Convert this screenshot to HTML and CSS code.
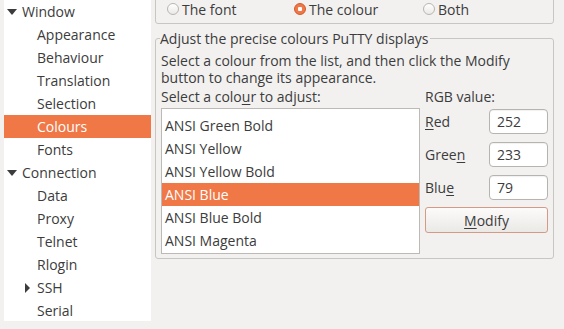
FILE: index.html
```html
<!DOCTYPE html>
<html lang="en">

<head>
    <meta charset="UTF-8">
    <title>PuTTY Configuration - Colours</title>
    <link rel="stylesheet" href="styles.css">
</head>

<body>
    <div class="dialog">
        <ul class="tree">
            <li class="node"><span class="arrow down"></span>Window</li>
            <li class="leaf">Appearance</li>
            <li class="leaf">Behaviour</li>
            <li class="leaf">Translation</li>
            <li class="leaf">Selection</li>
            <li class="leaf selected">Colours</li>
            <li class="leaf">Fonts</li>
            <li class="node"><span class="arrow down"></span>Connection</li>
            <li class="leaf">Data</li>
            <li class="leaf">Proxy</li>
            <li class="leaf">Telnet</li>
            <li class="leaf">Rlogin</li>
            <li class="leaf has-kids"><span class="arrow right"></span>SSH</li>
            <li class="leaf">Serial</li>
        </ul>

        <div class="panel">
            <div class="frame radios">
                <label class="radio"><span class="dot"></span>The font</label>
                <label class="radio"><span class="dot checked"></span>The colour</label>
                <label class="radio"><span class="dot"></span>Both</label>
            </div>

            <fieldset class="frame colours">
                <legend>Adjust the precise colours PuTTY displays</legend>
                <p class="hint">Select a colour from the list, and then click the Modify<br>button to change its appearance.</p>
                <div class="columns">
                    <div class="pick">
                        <div class="caption">Select a colo<u>u</u>r to adjust:</div>
                        <ul class="list">
                            <li>ANSI Green Bold</li>
                            <li>ANSI Yellow</li>
                            <li>ANSI Yellow Bold</li>
                            <li class="selected">ANSI Blue</li>
                            <li>ANSI Blue Bold</li>
                            <li>ANSI Magenta</li>
                        </ul>
                    </div>
                    <div class="rgb">
                        <div class="caption">RGB value:</div>
                        <div class="field">
                            <label for="red"><u>R</u>ed</label>
                            <input type="text" id="red" value="252">
                        </div>
                        <div class="field">
                            <label for="green">Gree<u>n</u></label>
                            <input type="text" id="green" value="233">
                        </div>
                        <div class="field">
                            <label for="blue">Blu<u>e</u></label>
                            <input type="text" id="blue" value="79">
                        </div>
                        <button type="button"><u>M</u>odify</button>
                    </div>
                </div>
            </fieldset>
        </div>
    </div>
</body>

</html>
```

FILE: styles.css
```css
body {
    margin: 0;
    background: #f2f1f0;
    font-family: "Open Sans", sans-serif;
    font-size: 14px;
    color: #3c3c3c;
    overflow: hidden;
}

ul {
    list-style: none;
    margin: 0;
    padding: 0;
}

u {
    text-decoration-thickness: 1px;
    text-underline-offset: 2px;
}

.dialog {
    display: flex;
    gap: 4px;
    padding-left: 4px;
}

/* tree on the left */

.tree {
    width: 147px;
    height: 321px;
    background: #fff;
}

.tree li {
    display: flex;
    align-items: center;
    height: 23px;
    white-space: nowrap;
}

.tree .node {
    padding-left: 3px;
}

.tree .leaf {
    padding-left: 33px;
}

.tree .has-kids {
    padding-left: 21px;
}

.tree .selected {
    background: #f07746;
    color: #fff;
}

.arrow {
    width: 0;
    height: 0;
    border-style: solid;
    border-color: transparent;
}

.arrow.down {
    border-width: 6px 5px 0 5px;
    border-top-color: #3c3c3c;
    margin-right: 5px;
}

.arrow.right {
    border-width: 5px 0 5px 5px;
    border-left-color: #3c3c3c;
    margin-right: 7px;
}

/* right panel */

.panel {
    width: 399px;
}

.frame {
    border: 1px solid #c9c5c0;
    border-radius: 3px;
}

.radios {
    box-sizing: border-box;
    height: 34px;
    margin-top: -10px;
    padding: 4px 0 0 11px;
    display: flex;
    align-items: center;
}

.radio {
    display: flex;
    align-items: center;
    gap: 3px;
}

.radio:nth-child(1) {
    width: 127px;
}

.radio:nth-child(2) {
    width: 129px;
}

.dot {
    box-sizing: border-box;
    width: 12px;
    height: 12px;
    border-radius: 50%;
    border: 1px solid #b9b5b0;
    background: linear-gradient(#fff, #ebe9e7);
}

.dot.checked {
    border-color: #d3582a;
    background: radial-gradient(circle, #fff 0 2px, #f07746 2.5px);
}

.colours {
    margin: 6px 0 0;
    padding: 0 5px 4px;
    min-width: 0;
}

.colours legend {
    padding: 0 2px 0 0;
    margin-left: -1px;
    line-height: 17px;
    background: #f2f1f0;
}

.hint {
    margin: 5px 0 0;
    line-height: 17px;
}

.columns {
    display: flex;
    gap: 5px;
    margin-top: 2px;
}

.caption {
    line-height: 17px;
}

.list {
    box-sizing: border-box;
    width: 259px;
    height: 146px;
    margin-top: 3px;
    padding-top: 5px;
    background: #fff;
    border: 1px solid #bdb9b4;
    overflow: hidden;
}

.list li {
    height: 23px;
    line-height: 23px;
    padding-left: 3px;
}

.list .selected {
    background: #f07746;
    color: #fff;
}

.rgb {
    width: 124px;
    display: flex;
    flex-direction: column;
}

.field {
    display: flex;
    align-items: center;
    justify-content: space-between;
    margin-top: 8px;
}

.rgb .caption + .field {
    margin-top: 4px;
}

.field input {
    box-sizing: border-box;
    width: 59px;
    height: 25px;
    padding: 0 0 0 7px;
    border: 1px solid #b7b3ae;
    border-radius: 4px;
    font: inherit;
    color: #3c3c3c;
    background: #fff;
    box-shadow: inset 0 1px 1px rgba(0, 0, 0, 0.06);
}

button {
    box-sizing: border-box;
    height: 26px;
    margin-top: 7px;
    border: 1px solid #d39b85;
    border-radius: 3px;
    background: linear-gradient(#fcfbfa, #ebe9e6);
    font: inherit;
    color: #3c3c3c;
    padding: 0;
}
```
